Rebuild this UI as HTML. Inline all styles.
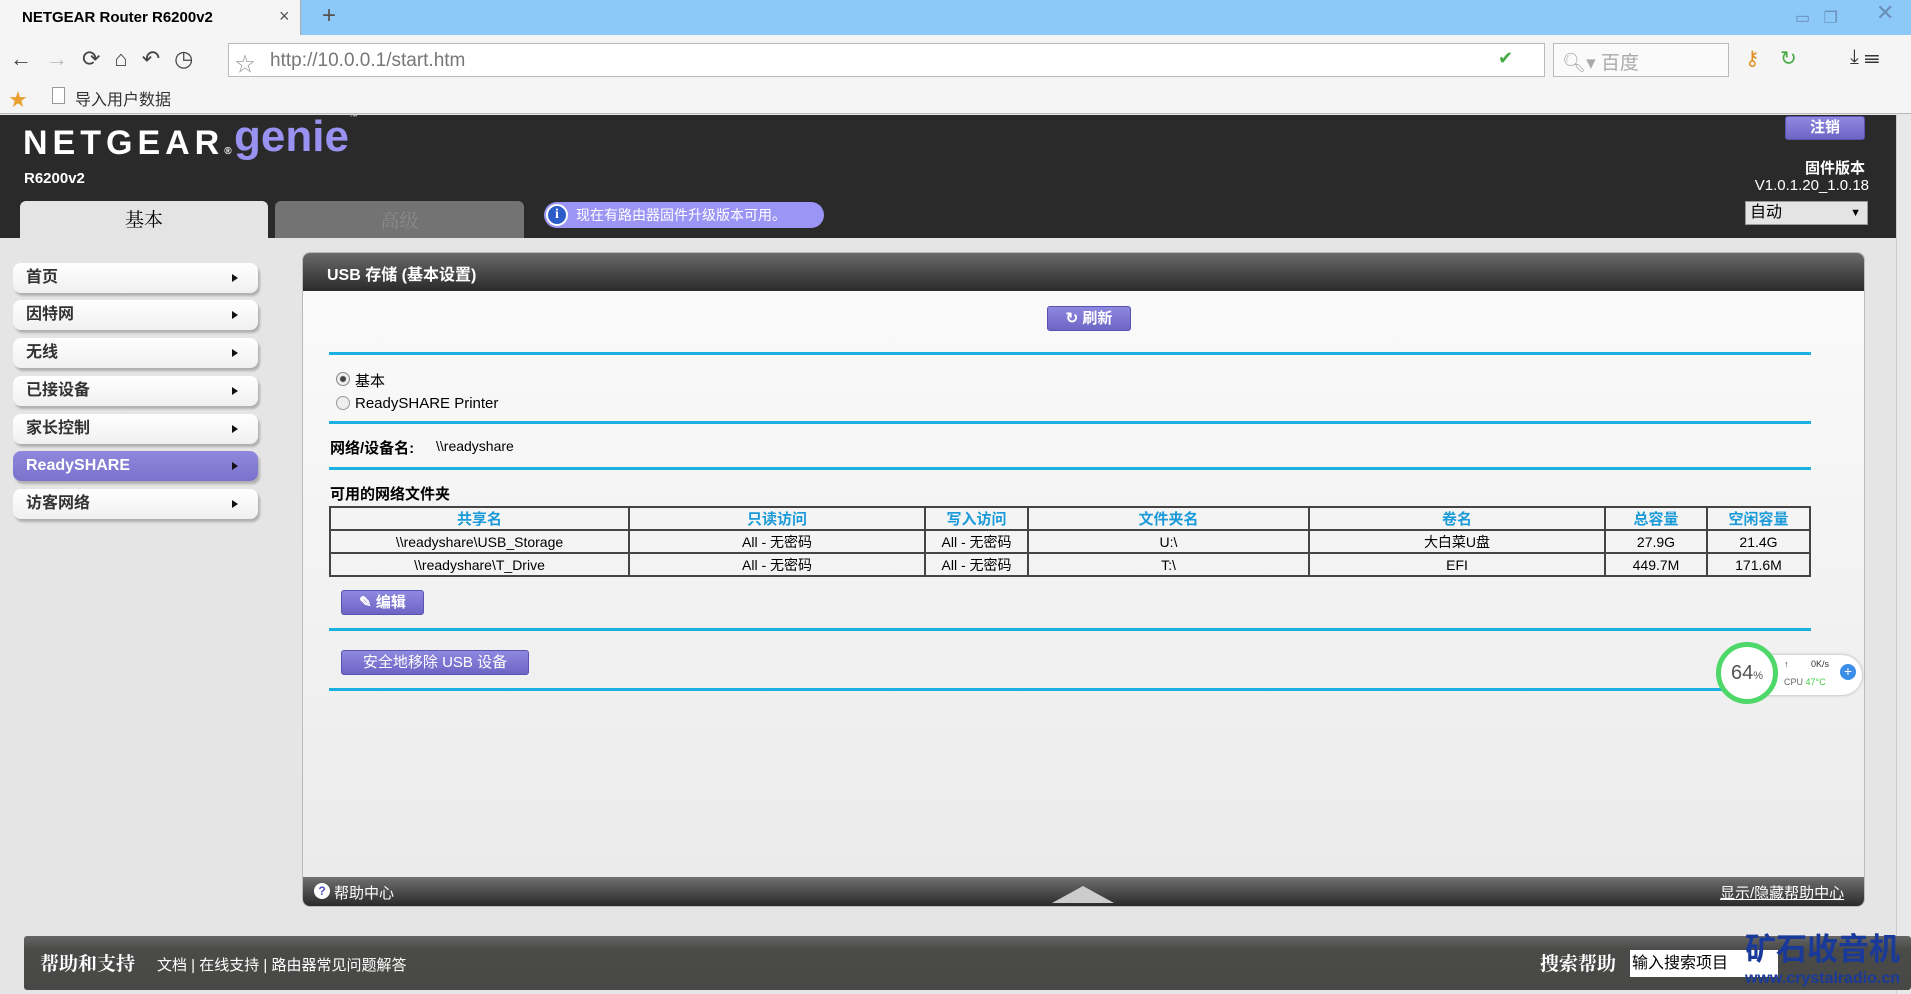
<!DOCTYPE html>
<html><head><meta charset="utf-8"><style>
*{margin:0;padding:0;box-sizing:border-box}
body{width:1911px;height:994px;overflow:hidden;background:#e5e5e5;font-family:"Liberation Sans","Noto Sans CJK SC",sans-serif;position:relative;font-size:15px}
.a{position:absolute}
.btn{position:absolute;background:linear-gradient(#8f88e0,#6d65c4);border:1px solid #5a52b0;border-radius:3px;color:#fff;font-size:15px;text-align:center;font-weight:bold}
.mi{position:absolute;left:13px;width:245px;height:30px;background:linear-gradient(#fff,#f0f0f0);border-radius:8px;box-shadow:2px 3px 2px #b0b0b0;font-size:16px;font-weight:bold;color:#333;padding-left:13px;line-height:30px}
.mi:after{content:"";position:absolute;right:20px;top:11px;border-left:6px solid #111;border-top:4px solid transparent;border-bottom:4px solid transparent}
.bl{position:absolute;left:329px;width:1482px;height:3px;background:#1ab0e0}
table{border-collapse:collapse;position:absolute;left:329px;top:506px;width:1482px;font-size:14px}
td,th{border:2px solid #444;text-align:center;height:23px;font-weight:normal}
th{color:#1a9ad8;font-weight:bold;font-size:15px}
</style></head><body>
<div class="a" style="left:0;top:0;width:1911px;height:35px;background:#8cc8f8"></div>
<div class="a" style="left:0;top:0;width:301px;height:35px;background:#f5f5f5;border-right:1px solid #aaa"></div>
<div class="a" style="left:22px;top:9px;font-size:15px;font-weight:bold">NETGEAR Router R6200v2</div>
<div class="a" style="left:279px;top:6px;font-size:18px;color:#555">×</div>
<div class="a" style="left:322px;top:2px;font-size:24px;color:#555">+</div>
<div class="a" style="left:1795px;top:8px;font-size:16px;color:#6a8fb8">▭ &nbsp; ❐</div>
<div class="a" style="left:1876px;top:0px;font-size:22px;color:#6a8fb8">✕</div>
<div class="a" style="left:0;top:35px;width:1911px;height:79px;background:#f5f5f5;border-bottom:1px solid #bbb"></div>
<div class="a" style="left:10px;top:46px;font-size:22px;color:#444;letter-spacing:14px">←<span style="color:#bbb">→</span>⟳⌂↶◷</div>
<div class="a" style="left:228px;top:43px;width:1317px;height:34px;background:#fff;border:1px solid #bbb"></div>
<div class="a" style="left:235px;top:48px;font-size:20px;color:#999">☆</div>
<div class="a" style="left:270px;top:50px;font-size:19px;color:#777">http://10.0.0.1/start.htm</div>
<div class="a" style="left:1498px;top:48px;font-size:18px;color:#4a4">✔</div>
<div class="a" style="left:1553px;top:43px;width:176px;height:34px;background:#fafafa;border:1px solid #bbb"></div>
<div class="a" style="left:1562px;top:48px;font-size:19px;color:#aaa">🔍︎▾ 百度</div>
<div class="a" style="left:1745px;top:46px;font-size:20px;color:#e09020">⚷</div>
<div class="a" style="left:1780px;top:46px;font-size:20px;color:#4a4">↻</div>
<div class="a" style="left:1850px;top:46px;font-size:20px;color:#333">⤓ ☰</div>
<div class="a" style="left:9px;top:86px;font-size:18px;color:#e8a030">★</div>
<div class="a" style="left:52px;top:87px;width:13px;height:17px;border:1px solid #999;background:#fff"></div>
<div class="a" style="left:75px;top:86px;font-size:16px;color:#333">导入用户数据</div>
<div class="a" style="left:0;top:115px;width:1896px;height:123px;background:#2a2a2a"></div>
<div class="a" style="left:1896px;top:115px;width:15px;height:879px;background:#e8e8e8;border-left:1px solid #ccc"></div>
<div class="a" style="left:23px;top:124px;font-size:34px;font-weight:bold;color:#fff;letter-spacing:5px">NETGEAR<span style="font-size:10px">®</span></div>
<div class="a" style="left:234px;top:112px;font-size:44px;font-weight:bold;color:#9a92f0">genie<span style="font-size:9px;vertical-align:top;color:#ccc">™</span></div>
<div class="a" style="left:24px;top:170px;font-size:15px;font-weight:bold;color:#fff">R6200v2</div>
<div class="a" style="left:20px;top:201px;width:248px;height:37px;background:#e4e4e4;border-radius:6px 6px 0 0;text-align:center;font-size:19px;line-height:36px;font-family:'Noto Serif CJK SC',serif">基本</div>
<div class="a" style="left:275px;top:201px;width:249px;height:37px;background:#737373;border-radius:6px 6px 0 0;text-align:center;font-size:19px;line-height:38px;color:#8a8a8a;font-family:'Noto Serif CJK SC',serif">高级</div>
<div class="a" style="left:544px;top:202px;width:280px;height:26px;background:#9b95f5;border-radius:13px;color:#fff;font-size:14px;line-height:26px;padding-left:32px">现在有路由器固件升级版本可用。</div>
<div class="a" style="left:546px;top:204px;width:22px;height:22px;border-radius:50%;background:#2b5cc8;border:2px solid #fff;color:#fff;font-weight:bold;text-align:center;font-size:14px;line-height:18px;font-family:'Liberation Serif',serif">i</div>
<div class="btn" style="left:1785px;top:116px;width:80px;height:24px;line-height:22px;font-size:15px">注销</div>
<div class="a" style="left:1700px;top:157px;width:165px;text-align:right;color:#fff;font-size:15px;font-weight:bold">固件版本</div>
<div class="a" style="left:1700px;top:177px;width:169px;text-align:right;color:#fff;font-size:15px">V1.0.1.20_1.0.18</div>
<div class="a" style="left:1745px;top:201px;width:123px;height:24px;background:#e4e4e4;border:1px solid #999;font-size:16px;padding-left:4px;line-height:22px">自动<span style="position:absolute;right:6px;font-size:11px">▼</span></div>
<div class="mi" style="top:263px">首页</div>
<div class="mi" style="top:300px">因特网</div>
<div class="mi" style="top:338px">无线</div>
<div class="mi" style="top:376px">已接设备</div>
<div class="mi" style="top:414px">家长控制</div>
<div class="mi" style="top:451px;background:linear-gradient(#8f88dc,#7a72cc);color:#fff;font-family:'Liberation Sans',sans-serif">ReadySHARE</div>
<div class="mi" style="top:489px">访客网络</div>
<div class="a" style="left:302px;top:252px;width:1563px;height:655px;background:linear-gradient(#fbfbfb,#eaeaea);border:1px solid #bbb;border-radius:8px;overflow:hidden">
 <div style="height:38px;background:linear-gradient(#6a6a6a,#2a2a2a);color:#fff;font-weight:bold;font-size:16px;padding:8px 24px">USB 存储 (基本设置)</div>
 <div style="position:absolute;left:0;bottom:0;width:100%;height:29px;background:linear-gradient(#707070,#2a2a2a)"></div>
</div>
<div class="a" style="left:314px;top:883px;width:16px;height:16px;border-radius:50%;background:#fff;color:#5050c0;font-size:12px;text-align:center;font-weight:bold;line-height:16px">?</div>
<div class="a" style="left:334px;top:882px;color:#fff;font-size:15px">帮助中心</div>
<div class="a" style="left:1052px;top:886px;width:0;height:0;border-left:31px solid transparent;border-right:31px solid transparent;border-bottom:17px solid #ccc"></div>
<div class="a" style="left:1720px;top:882px;color:#fff;font-size:15px;text-decoration:underline">显示/隐藏帮助中心</div>
<div class="btn" style="left:1047px;top:306px;width:84px;height:25px;line-height:23px">↻ 刷新</div>
<div class="bl" style="top:352px"></div>
<div class="a" style="left:336px;top:372px;width:14px;height:14px;border-radius:50%;border:1px solid #888;background:radial-gradient(#444 30%,#eee 40%)"></div>
<div class="a" style="left:355px;top:370px;font-size:15px">基本</div>
<div class="a" style="left:336px;top:396px;width:14px;height:14px;border-radius:50%;border:1px solid #999;background:#eee"></div>
<div class="a" style="left:355px;top:395px;font-size:15px">ReadySHARE Printer</div>
<div class="bl" style="top:421px"></div>
<div class="a" style="left:330px;top:437px;font-size:15px;font-weight:bold">网络/设备名:</div>
<div class="a" style="left:436px;top:438px;font-size:14px">\\readyshare</div>
<div class="bl" style="top:467px"></div>
<div class="a" style="left:330px;top:483px;font-size:15px;font-weight:bold">可用的网络文件夹</div>
<table>
<tr><th style="width:299px">共享名</th><th style="width:296px">只读访问</th><th style="width:103px">写入访问</th><th style="width:281px">文件夹名</th><th style="width:296px">卷名</th><th style="width:102px">总容量</th><th>空闲容量</th></tr>
<tr><td>\\readyshare\USB_Storage</td><td>All - 无密码</td><td>All - 无密码</td><td>U:\</td><td>大白菜U盘</td><td>27.9G</td><td>21.4G</td></tr>
<tr><td>\\readyshare\T_Drive</td><td>All - 无密码</td><td>All - 无密码</td><td>T:\</td><td>EFI</td><td>449.7M</td><td>171.6M</td></tr>
</table>
<div class="btn" style="left:341px;top:590px;width:83px;height:25px;line-height:23px">✎ 编辑</div>
<div class="bl" style="top:628px"></div>
<div class="btn" style="left:341px;top:650px;width:188px;height:25px;line-height:23px;font-weight:normal">安全地移除 USB 设备</div>
<div class="bl" style="top:688px"></div>
<div class="a" style="left:1740px;top:655px;width:122px;height:40px;background:#fff;border-radius:20px;box-shadow:0 0 3px #aaa"></div>
<div class="a" style="left:1716px;top:642px;width:62px;height:62px;border-radius:50%;border:5px solid #4ed86a;background:#fff;font-size:20px;color:#555;text-align:center;line-height:52px">64<span style="font-size:11px">%</span></div>
<div class="a" style="left:1784px;top:659px;font-size:9px;color:#333">↑ &nbsp;&nbsp;&nbsp;&nbsp;&nbsp;&nbsp;&nbsp; 0K/s</div>
<div class="a" style="left:1784px;top:677px;font-size:9px;color:#666">CPU <span style="color:#4c4">47°C</span></div>
<div class="a" style="left:1840px;top:664px;width:16px;height:16px;border-radius:50%;background:#3a8ee8;color:#fff;font-size:14px;text-align:center;line-height:15px">+</div>
<div class="a" style="left:24px;top:936px;width:1887px;height:54px;background:linear-gradient(#666,#4a4a48 25%,#484846);border-radius:3px"></div>
<div class="a" style="left:40px;top:949px;color:#fff;font-size:19px;font-weight:bold;font-family:'Noto Serif CJK SC',serif">帮助和支持</div>
<div class="a" style="left:157px;top:954px;color:#fff;font-size:15px">文档 | 在线支持 | 路由器常见问题解答</div>
<div class="a" style="left:1540px;top:949px;color:#fff;font-size:19px;font-weight:bold;font-family:'Noto Serif CJK SC',serif">搜索帮助</div>
<div class="a" style="left:1630px;top:950px;width:148px;height:27px;background:#fff;font-size:16px;line-height:27px;padding-left:2px">输入搜索项目</div>
<div class="a" style="left:1745px;top:932px;font-size:31px;line-height:36px;font-weight:bold;color:#1a3a9a;white-space:nowrap">矿石收音机</div>
<div class="a" style="left:1745px;top:970px;font-size:16px;font-weight:bold;color:#1a3a9a;white-space:nowrap">www.crystalradio.cn</div>
</body></html>
